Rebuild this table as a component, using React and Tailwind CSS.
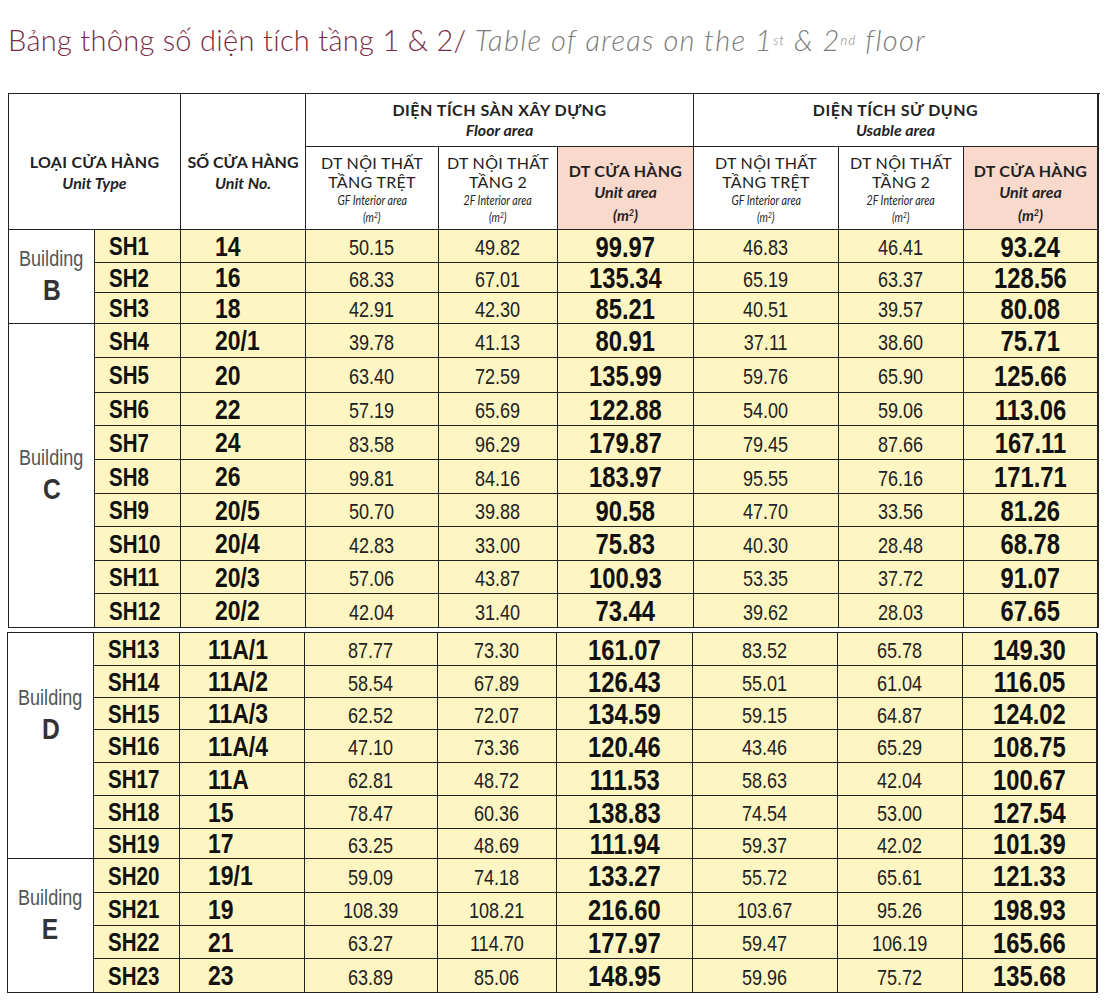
import React from "react";

const top = [
  { b: "B", span: "row-span-3", h: "h-[33px]", sh: "SH1", no: "14", v: ["50.15", "49.82", "99.97", "46.83", "46.41", "93.24"] },
  { h: "h-[30px]", sh: "SH2", no: "16", v: ["68.33", "67.01", "135.34", "65.19", "63.37", "128.56"] },
  { h: "h-[31px]", sh: "SH3", no: "18", v: ["42.91", "42.30", "85.21", "40.51", "39.57", "80.08"] },
  { b: "C", span: "row-span-9", h: "h-[34px]", sh: "SH4", no: "20/1", v: ["39.78", "41.13", "80.91", "37.11", "38.60", "75.71"] },
  { h: "h-[35px]", sh: "SH5", no: "20", v: ["63.40", "72.59", "135.99", "59.76", "65.90", "125.66"] },
  { h: "h-[33px]", sh: "SH6", no: "22", v: ["57.19", "65.69", "122.88", "54.00", "59.06", "113.06"] },
  { h: "h-[34px]", sh: "SH7", no: "24", v: ["83.58", "96.29", "179.87", "79.45", "87.66", "167.11"] },
  { h: "h-[34px]", sh: "SH8", no: "26", v: ["99.81", "84.16", "183.97", "95.55", "76.16", "171.71"] },
  { h: "h-[33px]", sh: "SH9", no: "20/5", v: ["50.70", "39.88", "90.58", "47.70", "33.56", "81.26"] },
  { h: "h-[34px]", sh: "SH10", no: "20/4", v: ["42.83", "33.00", "75.83", "40.30", "28.48", "68.78"] },
  { h: "h-[33px]", sh: "SH11", no: "20/3", v: ["57.06", "43.87", "100.93", "53.35", "37.72", "91.07"] },
  { h: "h-[34px]", sh: "SH12", no: "20/2", v: ["42.04", "31.40", "73.44", "39.62", "28.03", "67.65"] },
];

const bottom = [
  { b: "D", span: "row-span-7", pad: "pb-[60px]", h: "h-[33px]", sh: "SH13", no: "11A/1", v: ["87.77", "73.30", "161.07", "83.52", "65.78", "149.30"] },
  { h: "h-[32px]", sh: "SH14", no: "11A/2", v: ["58.54", "67.89", "126.43", "55.01", "61.04", "116.05"] },
  { h: "h-[32px]", sh: "SH15", no: "11A/3", v: ["62.52", "72.07", "134.59", "59.15", "64.87", "124.02"] },
  { h: "h-[33px]", sh: "SH16", no: "11A/4", v: ["47.10", "73.36", "120.46", "43.46", "65.29", "108.75"] },
  { h: "h-[33px]", sh: "SH17", no: "11A", v: ["62.81", "48.72", "111.53", "58.63", "42.04", "100.67"] },
  { h: "h-[33px]", sh: "SH18", no: "15", v: ["78.47", "60.36", "138.83", "74.54", "53.00", "127.54"] },
  { h: "h-[30px]", sh: "SH19", no: "17", v: ["63.25", "48.69", "111.94", "59.37", "42.02", "101.39"] },
  { b: "E", span: "row-span-4", pad: "pb-[20px]", h: "h-[34px]", sh: "SH20", no: "19/1", v: ["59.09", "74.18", "133.27", "55.72", "65.61", "121.33"] },
  { h: "h-[33px]", sh: "SH21", no: "19", v: ["108.39", "108.21", "216.60", "103.67", "95.26", "198.93"] },
  { h: "h-[33px]", sh: "SH22", no: "21", v: ["63.27", "114.70", "177.97", "59.47", "106.19", "165.66"] },
  { h: "h-[34px]", sh: "SH23", no: "23", v: ["63.89", "85.06", "148.95", "59.96", "75.72", "135.68"] },
];

const cols =
  "grid grid-cols-[86px_86px_125px_133px_119px_136px_145px_125px_135px] border-t border-l border-[#222]";
const cell = "border-r border-b border-[#222]";
const narrow = "font-['Liberation_Sans',Arial,sans-serif]";
const head = "font-['Lato','Noto_Sans',sans-serif]";

function N({ children, left }) {
  return (
    <span className={`inline-block whitespace-nowrap scale-x-[0.82] ${left ? "origin-left" : ""}`}>{children}</span>
  );
}

function BodyRows({ rows, noPad }) {
  return rows.map((r) => (
    <React.Fragment key={r.sh}>
      {r.b && (
        <div className={`${r.span} ${cell} bg-white flex flex-col items-center justify-center ${r.pad || ""} ${narrow}`}>
          <div className="text-[22px] leading-[26px] text-[#555]">
            <N>Building</N>
          </div>
          <div className="text-[30px] leading-[36px] font-bold text-[#333]">
            <N>{r.b}</N>
          </div>
        </div>
      )}
      <div className={`${r.h} ${cell} bg-[#fdf6c3] flex items-center pl-[14px] pt-[2px] text-[25px] font-bold text-[#111] ${narrow}`}>
        <N left>{r.sh}</N>
      </div>
      <div className={`${r.h} ${cell} bg-[#fdf6c3] flex items-center ${noPad} pt-[1px] text-[28px] font-bold text-[#111] ${narrow}`}>
        <N left>{r.no}</N>
      </div>
      {r.v.map((x, i) => (
        <div
          key={i}
          className={`${r.h} ${cell} ${i === 5 ? "border-r-2" : ""} bg-[#fdf6c3] flex items-center justify-center pt-[3px] ${narrow} ${
            i === 2 || i === 5 ? "text-[29px] font-bold text-[#111]" : "text-[22px] text-[#222]"
          }`}
        >
          <N>{x}</N>
        </div>
      ))}
    </React.Fragment>
  ));
}

function SubHead({ a, b }) {
  return (
    <div className={`h-[83px] ${cell} bg-white flex flex-col items-center justify-center text-center text-[#222] ${head} pt-[2px]`}>
      <div className="text-[16px] leading-[19px] tracking-[0.3px]">DT NỘI THẤT</div>
      <div className="text-[16px] leading-[19px] tracking-[0.3px]">{a}</div>
      <div className="text-[13px] leading-[17px] italic mt-[1px]">
        <N>{b}</N>
      </div>
      <div className="text-[13px] leading-[16px] italic">
        <N>
          (m<sup className="text-[8px]">2</sup>)
        </N>
      </div>
    </div>
  );
}

function PinkHead({ last }) {
  return (
    <div className={`h-[83px] ${cell} ${last ? "border-r-2" : ""} bg-[#f9d9cc] flex flex-col items-center justify-center text-center text-[#222] ${head} pt-[10px]`}>
      <div className="text-[16px] leading-[20px] font-bold tracking-[0.3px]">DT CỬA HÀNG</div>
      <div className="text-[16px] leading-[21px] font-bold italic">Unit area</div>
      <div className="text-[15px] leading-[22px] font-bold italic mt-[2px]">
        (m<sup className="text-[9px]">2</sup>)
      </div>
    </div>
  );
}

export default function App() {
  return (
    <div className="bg-white w-[1110px] min-h-[1006px] pl-[8px] pt-[22px]">
      <h1 className="text-[29px] leading-[36px] font-light font-['Lato','Open_Sans',sans-serif] tracking-[0.3px] whitespace-nowrap">
        <span className="text-[#7b2a45]">Bảng thông số diện tích tầng 1 &amp; 2/</span>{" "}
        <span className="italic text-[#7c7c7c] tracking-[1.3px]">
          Table of areas on the 1<sup className="text-[13px]">st</sup> &amp; 2<sup className="text-[13px]">nd</sup> floor
        </span>
      </h1>

      <div className={`${cols} mt-[35px] w-[1092px]`}>
        <div className={`col-span-2 row-span-2 ${cell} flex flex-col items-center justify-center text-[#222] ${head} pt-[20px]`}>
          <div className="text-[16px] leading-[21px] font-bold tracking-[0.3px]">LOẠI CỬA HÀNG</div>
          <div className="text-[16px] leading-[21px] font-bold italic">Unit Type</div>
        </div>
        <div className={`row-span-2 ${cell} flex flex-col items-center justify-center text-[#222] ${head} pt-[20px]`}>
          <div className="text-[16px] leading-[21px] font-bold whitespace-nowrap">SỐ CỬA HÀNG</div>
          <div className="text-[16px] leading-[21px] font-bold italic">Unit No.</div>
        </div>
        <div className={`col-span-3 h-[53px] ${cell} flex flex-col items-center justify-center text-[#222] ${head}`}>
          <div className="text-[16px] leading-[20px] font-bold tracking-[0.5px]">DIỆN TÍCH SÀN XÂY DỰNG</div>
          <div className="text-[16px] leading-[20px] font-bold italic">Floor area</div>
        </div>
        <div className={`col-span-3 h-[53px] ${cell} border-r-2 flex flex-col items-center justify-center text-[#222] ${head}`}>
          <div className="text-[16px] leading-[20px] font-bold tracking-[0.5px]">DIỆN TÍCH SỬ DỤNG</div>
          <div className="text-[16px] leading-[20px] font-bold italic">Usable area</div>
        </div>
        <SubHead a="TẦNG TRỆT" b="GF Interior area" />
        <SubHead a="TẦNG 2" b="2F Interior area" />
        <PinkHead />
        <SubHead a="TẦNG TRỆT" b="GF Interior area" />
        <SubHead a="TẦNG 2" b="2F Interior area" />
        <PinkHead last />
        <BodyRows rows={top} noPad="pl-[34px]" />
      </div>

      <div className={`${cols} mt-[4px] w-[1090px] -ml-[1px]`}>
        <BodyRows rows={bottom} noPad="pl-[28px]" />
      </div>
    </div>
  );
}
